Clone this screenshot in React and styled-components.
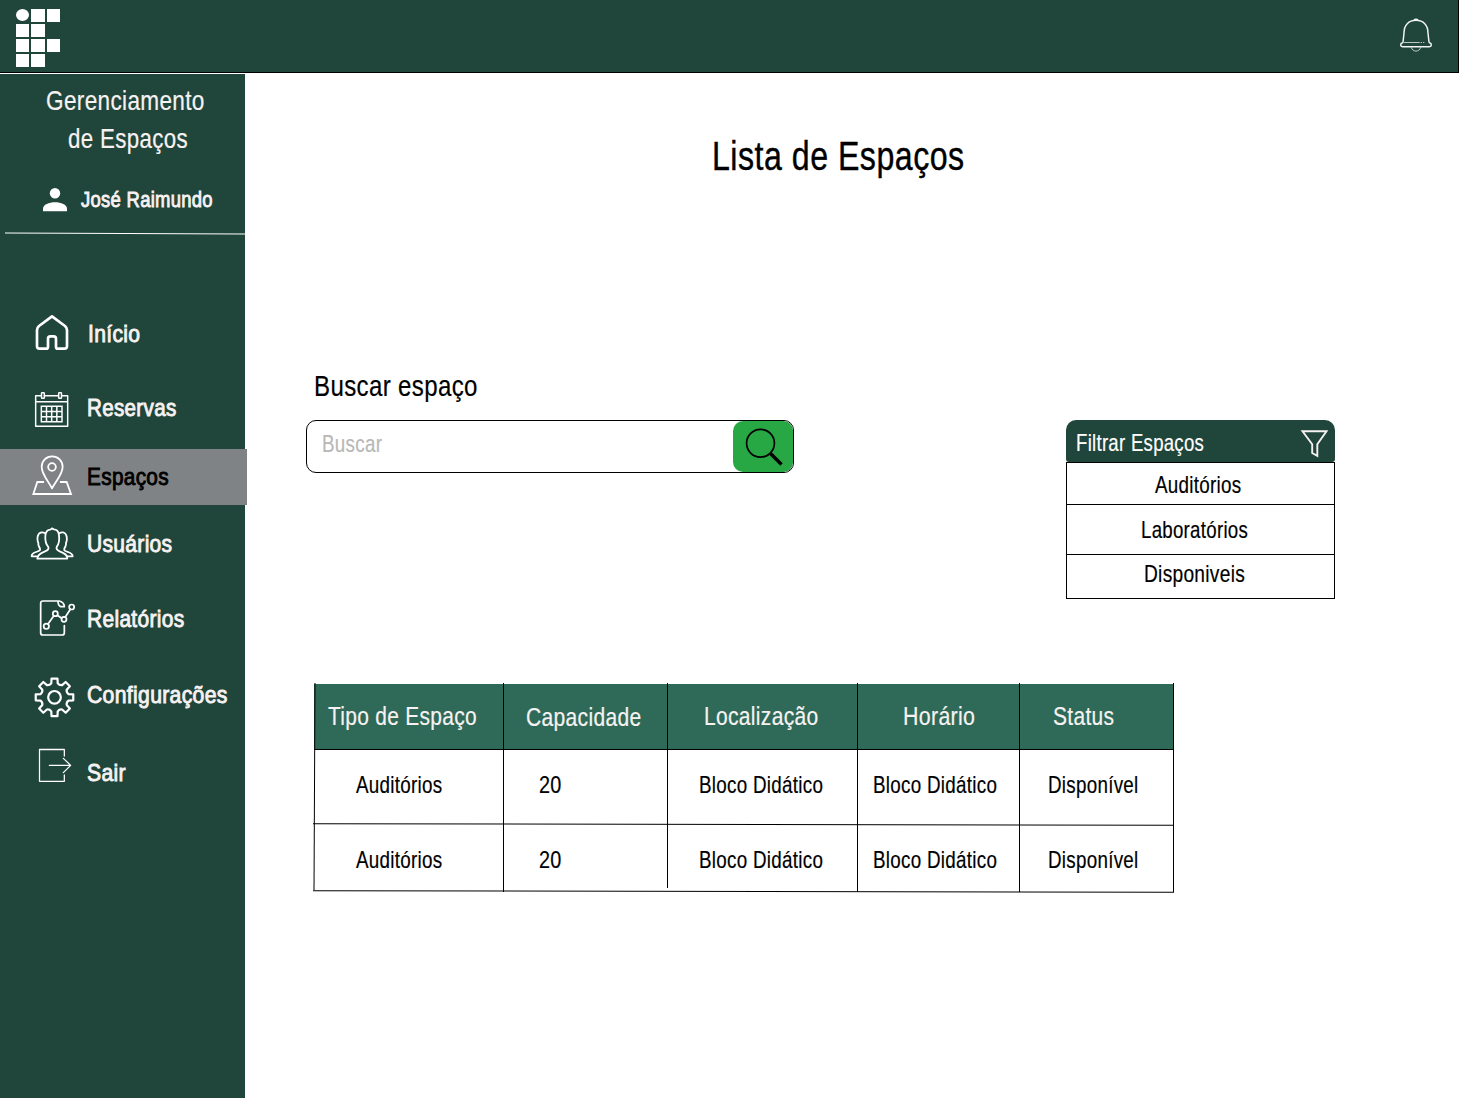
import React, { useLayoutEffect, useRef, useState } from "react";
import styled, { createGlobalStyle } from "styled-components";

const GlobalStyle = createGlobalStyle`
  * { box-sizing: border-box; }
  body { margin: 0; background: #fff; overflow: hidden; }
  body, input, button { font-family: "Liberation Sans Narrow", "Liberation Sans", Arial, sans-serif; }
`;

const green = "#20453a";
const offWhite = "#f7f2f2";

/* ---------- condensed text ---------- */

const tracking = 0.015;

const TextBox = styled.span`
  display: block;
  flex: none;
  width: ${(p) => p.$w}px;
  height: ${(p) => p.$size * 1.2}px;
  line-height: ${(p) => p.$size * 1.2}px;
  font-size: ${(p) => p.$size}px;
  letter-spacing: ${tracking}em;
  color: ${(p) => p.$color};
  white-space: nowrap;
  -webkit-text-stroke: ${(p) => (p.$medium ? 0.9 : p.$size > 35 ? 0.4 : 0.2)}px ${(p) => p.$color};
`;

const TextRun = styled.span`
  display: inline-block;
  transform-origin: 0 50%;
`;

function Text({ children, w, size = 24, color = "#000", medium }) {
  const run = useRef(null);
  const [scale, setScale] = useState(0.8);
  useLayoutEffect(() => {
    setScale(w / (run.current.offsetWidth - size * tracking));
  }, [w, size, children]);
  return (
    <TextBox $w={w} $size={size} $color={color} $medium={medium}>
      <TextRun ref={run} style={{ transform: `scaleX(${scale})` }}>{children}</TextRun>
    </TextBox>
  );
}

/* ---------- header ---------- */

const Page = styled.div`
  width: 1459px;
  height: 1098px;
  display: flex;
  flex-direction: column;
  gap: 1px;
  background: #fff;
`;

const Header = styled.header`
  height: 73px;
  flex: none;
  display: flex;
  justify-content: space-between;
  align-items: flex-start;
  padding: 9px 25px 0 16px;
  background: ${green};
  border-right: 1px solid #000;
  border-bottom: 1px solid #000;
`;

const Logo = styled.div`
  display: grid;
  grid-template-columns: 13px 14px 13px;
  grid-auto-rows: 13px;
  gap: 2px;
`;

const Tile = styled.i`
  background: ${(p) => (p.$empty ? "transparent" : "#fff")};
  border-radius: ${(p) => (p.$round ? "50%" : "0")};
  height: ${(p) => (p.$round ? "12px" : "13px")};
`;

const BellIcon = styled.svg`
  width: 34px;
  height: 36px;
  margin-top: 8px;
`;

/* ---------- sidebar ---------- */

const Body = styled.div`
  flex: 1;
  display: flex;
`;

const Sidebar = styled.aside`
  width: 245px;
  flex: none;
  background: ${green};
`;

const Brand = styled.div`
  height: 103px;
  padding: 10px 0 0 45.5px;
  display: flex;
  flex-direction: column;
  gap: 4.4px;
`;

const BrandLine = styled.div`
  padding-left: ${(p) => p.$indent || 0}px;
`;

const User = styled.div`
  height: 46px;
  display: flex;
  align-items: center;
  gap: 14px;
  padding-left: 43px;
`;

const UserIcon = styled.svg`
  width: 24px;
  height: 24px;
`;

const Divider = styled.div`
  height: 1px;
  margin: 10px 0 0 5px;
  background: #fff;
  transform: skewY(0.25deg);
`;

const Nav = styled.nav`
  padding-top: 72px;
`;

const NavItem = styled.a`
  display: flex;
  align-items: center;
  height: 56px;
  width: ${(p) => (p.$active ? 247 : 245)}px;
  margin-top: ${(p) => p.$gap}px;
  background: ${(p) => (p.$active ? "#808385" : "transparent")};
  position: relative;
`;

const NavIcon = styled.svg`
  width: 87px;
  height: 56px;
  flex: none;
  fill: none;
  stroke: #fff;
  stroke-width: ${(p) => p.$stroke || 4.5};
  stroke-linejoin: round;
  stroke-linecap: round;
`;

const gearPoints = (() => {
  const cx = 103.5, cy = 352, pts = [];
  for (let i = 0; i < 8; i++) {
    const mid = i * 45 - 90;
    [[-13, 43], [-9, 57], [9, 57], [13, 43]].forEach(([a, r]) => {
      const t = ((mid + a) * Math.PI) / 180;
      pts.push([cx + r * Math.cos(t), cy + r * Math.sin(t)]);
    });
  }
  return pts;
})();

const gearPath =
  gearPoints
    .map(([x, y], i) => {
      const p = `${x.toFixed(1)} ${y.toFixed(1)}`;
      if (i === 0) return `M${p}`;
      return i % 4 === 0 ? `A14 14 0 0 0 ${p}` : `L${p}`;
    })
    .join("") + `A14 14 0 0 0 ${gearPoints[0][0].toFixed(1)} ${gearPoints[0][1].toFixed(1)}Z`;

const navItems = [
  {
    label: "Início", w: 52.5, gap: 0, nudge: 1, view: 18, stroke: 8,
    icon: <path d="M96 49 L135 78 Q141 83 141 90 V139 Q141 146 134 146 H113 Q108 146 108 140 V116 Q108 109 101 109 H91 Q84 109 84 116 V140 Q84 146 79 146 H58 Q51 146 51 139 V90 Q51 83 57 78Z" />,
  },
  {
    label: "Reservas", w: 89, gap: 18, view: 240, stroke: 4.4,
    icon: (
      <>
        <path d="M64 287H47V379H143V287H126M73 287H115M47 305H143" />
        <rect x="64.500" y="278" width="8.500" height="17" rx="2" />
        <rect x="116" y="278" width="8.500" height="17" rx="2" />
        <path d="M64 319H126V365H64ZM64 334.500H126M64 350H126M79.500 319V365M95 319V365M110.500 319V365" strokeLinejoin="miter" />
      </>
    ),
  },
  {
    label: "Espaços", w: 82, gap: 13, view: 27, active: true, stroke: 5.4,
    icon: (
      <>
        <path d="M96 145C88 128 65 103 65 80A31.500 31 0 0 1 128 80C128 103 104 128 96 145Z" />
        <circle cx="96" cy="81" r="11.500" />
        <path d="M70 126H52L40 162H153L140 126H122" strokeLinejoin="miter" />
      </>
    ),
  },
  {
    label: "Usuários", w: 85.5, gap: 11, view: 228, stroke: 5.4,
    icon: (
      <>
        <path d="M52 356H142C143 345 135 340 119 334C112 331 108 327 110 321C117 312 119 302 117 286C116 273 108 268 101 268L96 265L91 269C82 269 77 276 76 288C75 302 78 313 85 321C87 327 83 331 75 334C59 340 52 345 52 356Z" />
        <path d="M51 349H35C34 342 39 339 48 336C57 333 62 332 60 326C57 318 54 318 55 309C51 301 52 289 55 284C58 277 68 275 75 280" />
        <path d="M142 349H158C158 342 153 339 144 336C135 333 131 332 133 326C136 318 139 318 138 309C142 301 141 289 138 284C134 276 125 275 118 280" />
      </>
    ),
  },
  {
    label: "Relatórios", w: 97.5, gap: 19, view: 33, stroke: 5.2,
    icon: (
      <>
        <path d="M133 137V158Q133 165 126 165H69Q62 165 62 158V70Q62 63 69 63H118Q133 67 133 80H122Q114 77 114 64" />
        <path d="M84 132L101 108M112 106L125 115M136 111L151 88" />
        <circle cx="79" cy="139" r="8" />
        <circle cx="106" cy="101" r="7.500" />
        <circle cx="132" cy="118" r="7.500" />
        <circle cx="155" cy="81" r="7.500" />
      </>
    ),
  },
  {
    label: "Configurações", w: 140, gap: 20, view: 261, stroke: 6.6,
    icon: (
      <>
        <path d={gearPath} />
        <circle cx="103.500" cy="352" r="19" />
      </>
    ),
  },
  {
    label: "Sair", w: 38.5, gap: 22, view: 495, stroke: 3.8,
    icon: <path d="M133 528V508.500H58.500V604H133V585M88 556H152M130 535L152 556L130 578" />,
  },
];

const NavLabel = styled.span`
  padding-left: ${(p) => p.$nudge || 0}px;
  transform: translateY(-0.5px);
`;

/* ---------- main ---------- */

const Main = styled.main`
  flex: 1;
  display: flex;
  flex-direction: column;
`;

const Title = styled.h1`
  margin: 0;
  height: 285px;
  padding: 58px 0 0 467px;
  font-weight: 400;
`;

const Tools = styled.section`
  height: 324px;
  display: flex;
  justify-content: space-between;
  align-items: flex-start;
  padding: 0 124px 0 61px;
`;

const Search = styled.div`
  width: 488px;
`;

const SearchLabel = styled.div`
  height: 61px;
  padding: 9.5px 0 0 7.5px;
`;

const SearchField = styled.div`
  height: 53px;
  display: flex;
  justify-content: space-between;
  border: 1px solid #000;
  border-radius: 10px;
  overflow: hidden;
`;

const Placeholder = styled.div`
  padding: 9px 0 0 15px;
`;

const SearchButton = styled.button`
  width: 60px;
  padding: 0;
  border: 0;
  border-radius: 10px 9px 9px 10px;
  background: #28a745;
`;

const SearchIcon = styled.svg`
  display: block;
  width: 60px;
  height: 51px;
  fill: none;
  stroke: #000;
`;

const Filter = styled.div`
  width: 269px;
  margin-top: 61px;
`;

const FilterHead = styled.div`
  height: 42px;
  display: flex;
  justify-content: space-between;
  padding: 9px 7px 0 9.5px;
  background: ${green};
  border-radius: 10px 10px 3px 3px;
`;

const FunnelIcon = styled.svg`
  width: 28px;
  height: 30px;
  fill: none;
  stroke: ${offWhite};
  stroke-width: 1.9;
`;

const FilterOption = styled.div`
  height: ${(p) => p.$h}px;
  padding: ${(p) => p.$top}px 0 0 ${(p) => p.$left}px;
  border: 1px solid #000;
  border-bottom-width: ${(p) => (p.$last ? 1 : 0)}px;
`;

/* ---------- table ---------- */

const Table = styled.div`
  width: 861px;
  margin-left: 68px;
  position: relative;
`;

const Row = styled.div`
  display: grid;
  grid-template-columns: 191px 164px 190px 162px 154px;
  height: ${(p) => p.$h}px;
`;

const HeadRow = styled(Row)`
  height: 67px;
  background: linear-gradient(#fff 1px, #2e6a57 1px);
  border-bottom: 1px solid #000;
  margin-left: 1px;
  grid-template-columns: 190px 164px 190px 162px 154px;
`;

const Cell = styled.div`
  height: ${(p) => (p.$h ? p.$h + "px" : "auto")};
  padding: ${(p) => p.$top}px 0 0 ${(p) => p.$left}px;
  border-right: 1px solid #000;
`;

const Rule = styled.i`
  position: absolute;
  left: 0;
  right: 0;
  top: ${(p) => p.$y}px;
  height: 1px;
  background: #000;
  transform: skewY(0.11deg);
`;

const SideRule = styled.i`
  position: absolute;
  left: 0.5px;
  top: 0;
  width: 1px;
  height: 207px;
  background: #000;
  transform: skewX(-0.27deg);
`;

const columns = [
  { title: "Tipo de Espaço", w: 148.5, left: 14, top: 17.5, cellLeft: 42.5 },
  { title: "Capacidade", w: 115.5, left: 21.5, top: 18.5, cellLeft: 35 },
  { title: "Localização", w: 114.5, left: 35.5, top: 17.5, cellLeft: 31 },
  { title: "Horário", w: 72, left: 44.5, top: 17.5, cellLeft: 15 },
  { title: "Status", w: 61, left: 32.5, top: 17.5, cellLeft: 28 },
];

const cells = [
  ["Auditórios", 86],
  ["20", 22],
  ["Bloco Didático", 123.5],
  ["Bloco Didático", 123.5],
  ["Disponível", 90.5],
];

export default function App() {
  return (
    <Page>
      <GlobalStyle />
      <Header>
        <Logo>
          <Tile $round /><Tile /><Tile />
          <Tile /><Tile /><Tile $empty />
          <Tile /><Tile /><Tile />
          <Tile /><Tile /><Tile $empty />
        </Logo>
        <BellIcon viewBox="57 51 102 108" fill="none" stroke="#f2f5f4" strokeWidth="4.4" strokeLinejoin="round">
          <path d="M69 127L72 99C72 75 86 61 108 61S144 75 144 99L147 127" />
          <path d="M69 127L63 131Q60 140 68 140H148Q156 140 153 131L147 127" />
          <path d="M71 127.500H119M122 127.500H126M129 127.500H133" strokeWidth="2.600" opacity="0.85" />
          <path d="M102 59Q108 56 114 59" />
          <path d="M94 142C97 157 119 157 122 142" strokeWidth="3" opacity="0.75" />
        </BellIcon>
      </Header>
      <Body>
        <Sidebar>
          <Brand>
            <BrandLine><Text w={158.5} size={28} color={offWhite}>Gerenciamento</Text></BrandLine>
            <BrandLine $indent={22.5}><Text w={120} size={28} color={offWhite}>de Espaços</Text></BrandLine>
          </Brand>
          <User>
            <UserIcon viewBox="0 0 24 24" fill="#fff">
              <circle cx="12" cy="5.200" r="5.200" />
              <path d="M0 23.200V20.500C0 16.500 6 14.200 12 14.200S24 16.500 24 20.500V23.200Z" />
            </UserIcon>
            <Text w={131.5} size={22} color={offWhite} medium>José Raimundo</Text>
          </User>
          <Divider />
          <Nav>
            {navItems.map((item) => (
              <NavItem key={item.label} $gap={item.gap} $active={item.active}>
                <NavIcon viewBox={`-60 ${item.view} 261 168`} $stroke={item.stroke}>{item.icon}</NavIcon>
                <NavLabel $nudge={item.nudge}>
                  <Text w={item.w} color={item.active ? "#000" : offWhite} medium>{item.label}</Text>
                </NavLabel>
              </NavItem>
            ))}
          </Nav>
        </Sidebar>
        <Main>
          <Title><Text w={252} size={40}>Lista de Espaços</Text></Title>
          <Tools>
            <Search>
              <SearchLabel><Text w={163} size={29}>Buscar espaço</Text></SearchLabel>
              <SearchField>
                <Placeholder><Text w={60} color="#b8b8b8">Buscar</Text></Placeholder>
                <SearchButton aria-label="Buscar">
                  <SearchIcon viewBox="0 0 60 51">
                    <circle cx="27.500" cy="22.200" r="13.900" strokeWidth="1.700" />
                    <path d="M37.500 32.500L48.500 43.500" strokeWidth="3.400" />
                  </SearchIcon>
                </SearchButton>
              </SearchField>
            </Search>
            <Filter>
              <FilterHead>
                <Text w={127.5} color="#fff">Filtrar Espaços</Text>
                <FunnelIcon viewBox="0 0 28 30">
                  <path d="M2.500 2.200H26.500L17.300 15.300V26.800L12.200 24V15.300Z" />
                </FunnelIcon>
              </FilterHead>
              <FilterOption $h={42} $top={8} $left={88}><Text w={86}>Auditórios</Text></FilterOption>
              <FilterOption $h={50} $top={11} $left={74}><Text w={107}>Laboratórios</Text></FilterOption>
              <FilterOption $h={45} $top={5} $left={77} $last><Text w={101}>Disponiveis</Text></FilterOption>
            </Filter>
          </Tools>
          <Table>
            <HeadRow>
              {columns.map((c) => (
                <Cell key={c.title} $left={c.left} $top={c.top}>
                  <Text w={c.w} size={26} color={offWhite}>{c.title}</Text>
                </Cell>
              ))}
            </HeadRow>
            {[0, 1].map((r) => (
              <Row key={r} $h={r === 0 ? 75 : 67}>
                {cells.map(([label, w], i) => (
                  <Cell key={i} $left={columns[i].cellLeft} $top={21} $h={r === 1 ? (i === 1 ? 63 : 67) : 75}>
                    <Text w={w}>{label}</Text>
                  </Cell>
                ))}
              </Row>
            ))}
            <Rule $y={141.3} />
            <Rule $y={208.2} />
            <SideRule />
          </Table>
        </Main>
      </Body>
    </Page>
  );
}
